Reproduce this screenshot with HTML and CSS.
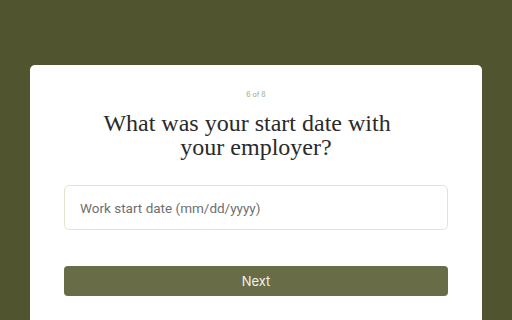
FILE: index.html
```html
<!DOCTYPE html>
<html>
<head>
<meta charset="utf-8">
<link rel="stylesheet" href="styles.css">
</head>
<body>
<main class="card">
  <div class="step">6 of 8</div>
  <h1 class="question"><span class="line line-first">What was your start date with</span> <span class="line">your employer?</span></h1>
  <input class="field" type="text" placeholder="Work start date (mm/dd/yyyy)">
  <button class="next">Next</button>
</main>
</body>
</html>
```
FILE: styles.css
```css
html, body {
  margin: 0;
  height: 100%;
}
body {
  background: #50552f;
  padding: 65px 30px 0;
  box-sizing: border-box;
  font-family: Inter, "Liberation Sans", sans-serif;
  overflow: hidden;
}
.card {
  background: #ffffff;
  border-radius: 5px 5px 0 0;
  height: 100%;
  padding: 24px 34px 0;
  box-sizing: border-box;
  display: flex;
  flex-direction: column;
  align-items: stretch;
}
.step {
  text-align: center;
  font-size: 7px;
  line-height: 12px;
  color: #9aab7e;
}
.question {
  margin: 10px 0 0;
  text-align: center;
  font-family: "Liberation Serif", serif;
  font-weight: normal;
  font-size: 24px;
  line-height: 24px;
  color: #2a2a2a;
}
.line {
  display: block;
}
.line-first {
  padding-right: 18px;
}
.field {
  margin-top: 26px;
  height: 45px;
  box-sizing: border-box;
  border: 1px solid #e3e5d0;
  border-radius: 5px;
  padding: 0 15px;
  font-family: Roboto, "Liberation Sans", sans-serif;
  font-size: 13.5px;
  color: #333;
  outline: none;
}
.field::placeholder {
  color: #6f6f6f;
}
.next {
  margin-top: 36px;
  height: 30px;
  border: none;
  border-radius: 4px;
  background: #686c47;
  color: #f2f2ea;
  font-family: Inter, "Liberation Sans", sans-serif;
  font-size: 13px;
  font-weight: 400;
}
```
